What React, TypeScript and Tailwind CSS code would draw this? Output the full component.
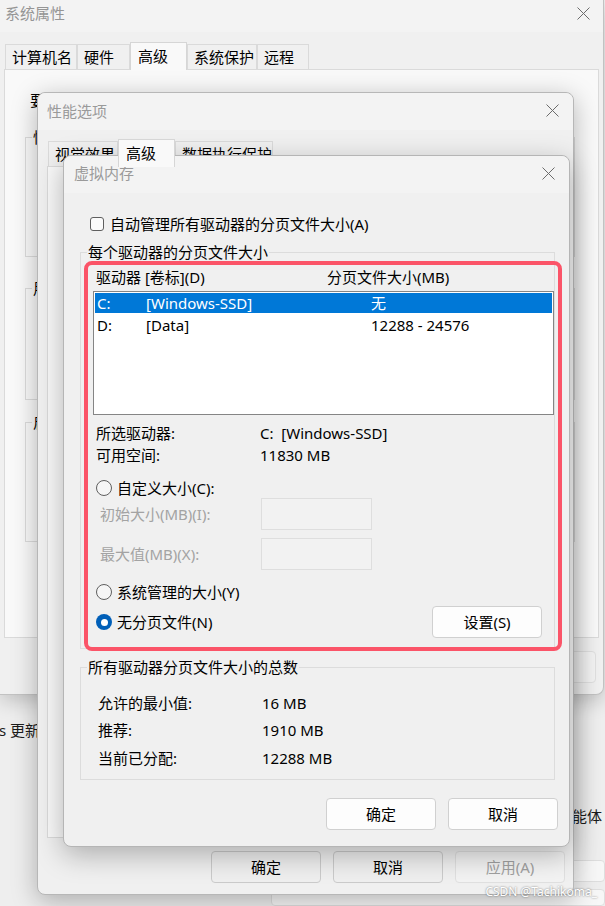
import React from 'react';

type Tone = 'active' | 'inactive' | 'disabled';

const Btn: React.FC<{ label: string; tone?: Tone }> = ({ label, tone = 'active' }) => {
  const cls =
    tone === 'active'
      ? 'bg-[#fdfdfd] border-[#d0d0d0] text-black'
      : tone === 'inactive'
        ? 'bg-[#efefef] border-[#cbcbcb] text-black'
        : 'bg-[#f3f3f3] border-[#e0e0e0] text-[#a0a0a0]';
  return (
    <div className={`w-[110px] h-[32px] shrink-0 flex items-center justify-center rounded-[4px] border ${cls}`}>
      {label}
    </div>
  );
};

const CloseX: React.FC<{ className?: string }> = ({ className = '' }) => (
  <svg width="13" height="13" viewBox="0 0 13 13" className={`shrink-0 text-[#6b6b6b] ${className}`}>
    <path d="M0.5 0.5L12.5 12.5M12.5 0.5L0.5 12.5" stroke="currentColor" strokeWidth="1" fill="none" />
  </svg>
);

const Tab: React.FC<{ label: string; w: string; active?: boolean }> = ({ label, w, active }) =>
  active ? (
    <div className={`${w} h-[28px] relative z-10 -mb-px bg-[#f9f9f9] border border-b-0 border-[#d6d6d6] pl-[7px] leading-[26px] whitespace-nowrap`}>
      {label}
    </div>
  ) : (
    <div className={`${w} h-[25px] bg-[#f0f0f0] border border-b-0 border-[#dadada] pl-[6px] leading-[25px] whitespace-nowrap`}>
      {label}
    </div>
  );

const Radio: React.FC<{ checked?: boolean }> = ({ checked }) =>
  checked ? (
    <span className="w-[16px] h-[16px] shrink-0 rounded-full bg-[#005fb8] flex items-center justify-center">
      <span className="w-[7px] h-[7px] rounded-full bg-white" />
    </span>
  ) : (
    <span className="w-[16px] h-[16px] shrink-0 rounded-full border border-[#5f5f5f] bg-[#f6f6f6]" />
  );

const Legend: React.FC<{ children: React.ReactNode }> = ({ children }) => (
  <legend className="ml-[6px] px-px leading-[20px] whitespace-nowrap">{children}</legend>
);

export default function App() {
  return (
    <div className="relative w-[605px] h-[906px] overflow-hidden bg-[#ececec] font-['Noto_Sans','Noto_Sans_CJK_SC',sans-serif] text-[15px] leading-[20px] text-black">
      {/* settings window far behind */}
      <div className="absolute inset-0 flex flex-col bg-[#eeeeee] text-[#1c1c1c]">
        <div className="mt-[720px] -ml-px h-[20px] whitespace-nowrap">s 更新</div>
        <div className="mt-[66px] ml-[572px] h-[20px] whitespace-nowrap">能体</div>
        <div className="mt-[34px] ml-[271px] h-[38px] rounded-[4px] border border-[#dedede] bg-[#f7f7f7]" />
        <div className="mt-[7px] ml-[271px] h-[30px] rounded-[4px] border border-[#dedede] bg-[#f7f7f7]" />
      </div>

      {/* 系统属性 */}
      <div className="absolute left-0 top-0 w-[604px] h-[695px] flex flex-col bg-[#f0f0f0] rounded-br-[8px] border-r border-b border-[#c2c2c2] shadow-[0_6px_20px_rgba(0,0,0,0.2)]">
        <div className="h-[32px] shrink-0 flex items-start justify-between pl-[5px] pr-[13px] pt-[3px] bg-[#f3f3f3] text-[#959595]">
          <span>系统属性</span>
          <CloseX className="mt-[4px]" />
        </div>
        <div className="h-[37px] shrink-0 flex items-end pl-[5px]">
          <Tab label="计算机名" w="w-[72px]" />
          <Tab label="硬件" w="w-[53px]" />
          <Tab label="高级" w="w-[57px]" active />
          <Tab label="系统保护" w="w-[70px]" />
          <Tab label="远程" w="w-[52px]" />
        </div>
        <div className="mx-[4px] h-[569px] shrink-0 flex flex-col pl-[20px] pt-[20px] bg-[#f9f9f9] border border-[#dadada]">
          <div className="pl-[5px] whitespace-nowrap">要进行大多数更改，你必须作为管理员登录。</div>
          <fieldset className="mt-[17px] w-[550px] h-[130px] border border-[#dcdcdc]">
            <Legend>性能</Legend>
          </fieldset>
          <fieldset className="mt-[21px] w-[550px] h-[122px] border border-[#dcdcdc]">
            <Legend>用户配置文件</Legend>
          </fieldset>
          <fieldset className="mt-[12px] w-[550px] h-[130px] border border-[#dcdcdc]">
            <Legend>启动和故障恢复</Legend>
          </fieldset>
        </div>
        <div className="mt-[13px] pr-[7px] flex justify-end gap-[12px]">
          <Btn label="确定" tone="inactive" />
          <Btn label="取消" tone="inactive" />
          <Btn label="应用(A)" tone="disabled" />
        </div>
      </div>

      {/* 性能选项 */}
      <div className="absolute left-[37px] top-[92px] w-[537px] h-[803px] flex flex-col bg-[#f0f0f0] rounded-[8px] border border-[#b7b7b7] shadow-[0_6px_26px_rgba(0,0,0,0.28)]">
        <div className="h-[37px] shrink-0 flex items-center justify-between pl-[9px] pr-[14px] pb-[2px] rounded-t-[8px] bg-[#f3f3f3] text-[#9a9a9a]">
          <span>性能选项</span>
          <CloseX />
        </div>
        <div className="h-[36px] shrink-0 flex items-end pl-[10px]">
          <Tab label="视觉效果" w="w-[70px]" />
          <Tab label="高级" w="w-[57px]" active />
          <Tab label="数据执行保护" w="w-[98px]" />
        </div>
        <div className="mx-[9px] h-[672px] shrink-0 bg-[#f9f9f9] border border-[#dadada]" />
        <div className="mt-[13px] pr-[8px] flex justify-end gap-[12px]">
          <Btn label="确定" tone="inactive" />
          <Btn label="取消" tone="inactive" />
          <Btn label="应用(A)" tone="disabled" />
        </div>
      </div>

      {/* 虚拟内存 */}
      <div className="absolute left-[63px] top-[155px] w-[507px] h-[692px] flex flex-col bg-[#f0f0f0] rounded-[8px] border border-[#b5b5b5] shadow-[0_8px_28px_rgba(0,0,0,0.28)]">
        <div className="h-[37px] shrink-0 flex items-center justify-between pl-[10px] pr-[14px] pb-[3px] rounded-t-[8px] bg-[#f3f3f3] text-[#9a9a9a]">
          <span>虚拟内存</span>
          <CloseX />
        </div>

        <div className="mt-[21px] ml-[26px] h-[20px] flex items-center gap-[6px]">
          <span className="w-[14px] h-[14px] rounded-[3px] border border-[#5f5f5f] bg-[#fbfbfb]" />
          <span className="whitespace-nowrap">自动管理所有驱动器的分页文件大小(A)</span>
        </div>

        <fieldset className="mt-[8px] ml-[16px] w-[475px] pb-[10px] border border-[#dcdcdc]">
          <Legend>每个驱动器的分页文件大小</Legend>
          <div className="mt-[5px] pl-[15px] h-[20px] flex items-center whitespace-nowrap">
            <span className="w-[231px]">驱动器 [卷标](D)</span>
            <span>分页文件大小(MB)</span>
          </div>
          <div className="mt-[4px] ml-[12px] w-[461px] h-[124px] pt-px flex flex-col gap-[2px] bg-white border border-[#858585]">
            <div className="mx-px h-[20px] pl-[2px] flex items-center bg-[#0078d7] text-white whitespace-nowrap">
              <span className="w-[49px]">C:</span>
              <span className="w-[225px]">[Windows-SSD]</span>
              <span>无</span>
            </div>
            <div className="mx-px h-[20px] pl-[2px] flex items-center whitespace-nowrap">
              <span className="w-[49px]">D:</span>
              <span className="w-[225px]">[Data]</span>
              <span>12288 - 24576</span>
            </div>
          </div>

          <div className="mt-[7px] pl-[15px] flex flex-col whitespace-nowrap">
            <div className="h-[22px] flex items-center">
              <span className="w-[164px]">所选驱动器:</span>
              <span className="whitespace-pre">C:  [Windows-SSD]</span>
            </div>
            <div className="h-[22px] flex items-center">
              <span className="w-[164px]">可用空间:</span>
              <span>11830 MB</span>
            </div>
          </div>

          <div className="mt-[12px] pl-[15px] h-[20px] flex items-center gap-[5px]">
            <Radio />
            <span>自定义大小(C):</span>
          </div>
          <div className="pl-[19px] h-[32px] flex items-center text-[#a3a3a3]">
            <span className="w-[161px]">初始大小(MB)(I):</span>
            <div className="w-[111px] h-[32px] border border-[#dedede] bg-[#f2f2f2]" />
          </div>
          <div className="mt-[8px] pl-[19px] h-[32px] flex items-center text-[#a3a3a3]">
            <span className="w-[161px]">最大值(MB)(X):</span>
            <div className="w-[111px] h-[32px] border border-[#dedede] bg-[#f2f2f2]" />
          </div>
          <div className="mt-[12px] pl-[15px] h-[20px] flex items-center gap-[5px]">
            <Radio />
            <span>系统管理的大小(Y)</span>
          </div>
          <div className="mt-[4px] pl-[15px] pr-[12px] h-[32px] flex items-center">
            <Radio checked />
            <span className="ml-[5px]">无分页文件(N)</span>
            <div className="ml-auto">
              <Btn label="设置(S)" />
            </div>
          </div>
        </fieldset>

        <fieldset className="mt-[8px] ml-[16px] w-[475px] pb-[10px] border border-[#dcdcdc]">
          <Legend>所有驱动器分页文件大小的总数</Legend>
          <div className="mt-[15px] pl-[17px] flex flex-col whitespace-nowrap">
            <div className="h-[22px] flex items-center">
              <span className="w-[164px]">允许的最小值:</span>
              <span>16 MB</span>
            </div>
            <div className="mt-[5px] h-[22px] flex items-center">
              <span className="w-[164px]">推荐:</span>
              <span>1910 MB</span>
            </div>
            <div className="mt-[6px] h-[22px] flex items-center">
              <span className="w-[164px]">当前已分配:</span>
              <span>12288 MB</span>
            </div>
          </div>
        </fieldset>

        <div className="mt-[18px] pr-[11px] flex justify-end gap-[12px]">
          <Btn label="确定" />
          <Btn label="取消" />
        </div>

        {/* red annotation box */}
        <div className="absolute left-[20px] top-[105px] w-[478px] h-[390px] rounded-[8px] border-4 border-[#fb5468] pointer-events-none" />
      </div>

      <div className="absolute right-[8px] bottom-[6px] text-[12px] leading-[16px] text-white whitespace-nowrap [text-shadow:0_0_2px_rgba(0,0,0,0.6)]">
        CSDN @Tachikoma_
      </div>
    </div>
  );
}
